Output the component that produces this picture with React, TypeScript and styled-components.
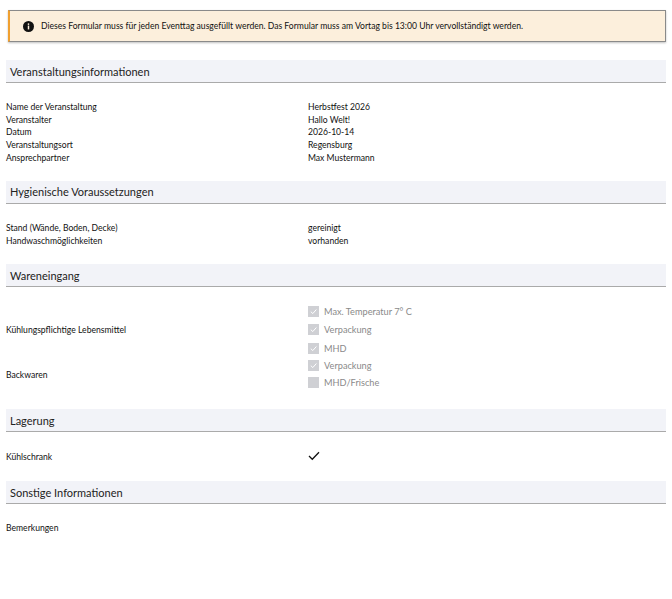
import React from "react";
import styled, { createGlobalStyle } from "styled-components";

const G = createGlobalStyle`
  body { margin: 0; font-family: Lato, "Liberation Sans", sans-serif; color: #111; background: #fff; }
`;
const Page = styled.div`padding: 10px 6px 0 6px; width: 660px;`;
const Banner = styled.div`
  margin: 0 0 18px 2px; height: 32px; box-sizing: border-box; background: #fcefdc;
  border: 1px solid #8a8a8a; border-left: 2px solid #f0a030;
  display: flex; align-items: center; gap: 7px; padding-left: 13px; font-size: 8.6px;
  box-shadow: 0 1px 2px rgba(0,0,0,.25);
`;
const Section = styled.div`margin-bottom: 0;`;
const Header = styled.div`
  height: 22px; background: #f2f3f8; border-bottom: 1px solid #aaa; display: flex; align-items: center;
  padding-left: 4px; font-size: 11px; color: #222;
`;
const Body = styled.div<{ pt: number; pb: number }>`padding: ${p => p.pt}px 0 ${p => p.pb}px 0;`;
const Row = styled.div<{ h?: number }>`display: grid; grid-template-columns: 302px 1fr; align-items: center; font-size: 8.6px; min-height: ${p => p.h ?? 12.6}px;`;
const Checks = styled.div`display: flex; flex-direction: column;`;
const CheckRow = styled.div`display: flex; align-items: center; gap: 5px; height: 18.5px; color: #8a8a8a; font-size: 9.2px;`;
const Box = styled.span`width: 11px; height: 11px; background: #cfd0d4; display: inline-flex; align-items: center; justify-content: center;`;

const Check = ({ on }: { on: boolean }) => (
  <Box>{on && <svg width="9" height="9" viewBox="0 0 10 10"><path d="M2 5.2 L4.2 7.3 L8.2 2.8" stroke="#fff" strokeWidth="1.1" fill="none" /></svg>}</Box>
);

export default function App() {
  return (
    <Page>
      <G />
      <Banner>
        <svg width="11" height="11" viewBox="0 0 12 12"><circle cx="6" cy="6" r="6" fill="#111" /><rect x="5.2" y="5" width="1.6" height="4.2" fill="#fcefdc" /><circle cx="6" cy="3.3" r="0.95" fill="#fcefdc" /></svg>
        Dieses Formular muss für jeden Eventtag ausgefüllt werden. Das Formular muss am Vortag bis 13:00 Uhr vervollständigt werden.
      </Banner>
      <Section>
        <Header>Veranstaltungsinformationen</Header>
        <Body pt={18} pb={17}>
          {[["Name der Veranstaltung","Herbstfest 2026"],["Veranstalter","Hallo Welt!"],["Datum","2026-10-14"],["Veranstaltungsort","Regensburg"],["Ansprechpartner","Max Mustermann"]].map(([a,b]) => <Row key={a}><span>{a}</span><span>{b}</span></Row>)}
        </Body>
      </Section>
      <Section>
        <Header>Hygienische Voraussetzungen</Header>
        <Body pt={18} pb={17}>
          <Row><span>Stand (Wände, Boden, Decke)</span><span>gereinigt</span></Row>
          <Row><span>Handwaschmöglichkeiten</span><span>vorhanden</span></Row>
        </Body>
      </Section>
      <Section>
        <Header>Wareneingang</Header>
        <Body pt={15} pb={17}>
          <Row><span>Kühlungspflichtige Lebensmittel</span><Checks>
            <CheckRow><Check on />Max. Temperatur 7° C</CheckRow>
            <CheckRow><Check on />Verpackung</CheckRow>
            <CheckRow><Check on />MHD</CheckRow>
          </Checks></Row>
          <Row><span>Backwaren</span><Checks>
            <CheckRow style={{ height: 16 }}><Check on />Verpackung</CheckRow>
            <CheckRow><Check on={false} />MHD/Frische</CheckRow>
          </Checks></Row>
        </Body>
      </Section>
      <Section>
        <Header>Lagerung</Header>
        <Body pt={17} pb={17}>
          <Row h={15}><span>Kühlschrank</span><span><svg width="12" height="10" viewBox="0 0 12 10"><path d="M1 5 L4.3 8.3 L11 1.3" stroke="#111" strokeWidth="1.3" fill="none" /></svg></span></Row>
        </Body>
      </Section>
      <Section>
        <Header>Sonstige Informationen</Header>
        <Body pt={18} pb={17}>
          <Row><span>Bemerkungen</span><span></span></Row>
        </Body>
      </Section>
    </Page>
  );
}
